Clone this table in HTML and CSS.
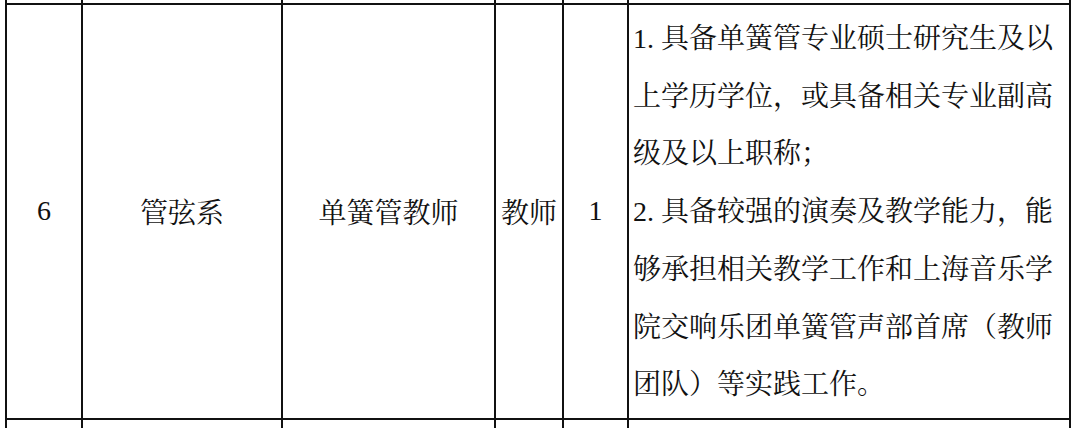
FILE: index.html
```html
<!DOCTYPE html>
<html lang="zh-CN">
<head>
<meta charset="utf-8">
<title>招聘岗位</title>
<link rel="stylesheet" href="styles.css">
</head>
<body>
<table class="grid">
  <colgroup>
    <col class="c-no">
    <col class="c-dept">
    <col class="c-post">
    <col class="c-type">
    <col class="c-num">
    <col class="c-req">
  </colgroup>
  <tr class="edge-top">
    <td></td><td></td><td></td><td></td><td></td><td></td>
  </tr>
  <tr class="main">
    <td class="center">6</td>
    <td class="center">管弦系</td>
    <td class="center">单簧管教师</td>
    <td class="center">教师</td>
    <td class="center">1</td>
    <td class="req"><span class="num">1.</span>具备单簧管专业硕士研究生及以<br>上学历学位，或具备相关专业副高<br>级及以上职称；<br><span class="num">2.</span>具备较强的演奏及教学能力，能<br>够承担相关教学工作和上海音乐学<br>院交响乐团单簧管声部首席（教师<br>团队）等实践工作。</td>
  </tr>
  <tr class="edge-bottom">
    <td></td><td></td><td></td><td></td><td></td><td></td>
  </tr>
</table>
</body>
</html>
```

FILE: styles.css
```css
html, body {
  margin: 0;
  padding: 0;
  overflow: hidden;
  background: #ffffff;
}

body {
  padding-left: 5px;
  font-family: "Liberation Serif", "Noto Serif CJK SC", "Noto Sans CJK SC", serif;
  font-size: 28px;
  color: #111111;
}

.grid {
  border-collapse: collapse;
  table-layout: fixed;
  width: 1064px;
}

.grid td {
  border: 2px solid #111111;
  padding: 0;
}

.c-no { width: 76px; }
.c-dept { width: 200px; }
.c-post { width: 213px; }
.c-type { width: 68px; }
.c-num { width: 65px; }
.c-req { width: 442px; }

.edge-top td {
  border-top: none;
  height: 3px;
}

.edge-bottom td {
  border-bottom: none;
  height: 20px;
}

.main td {
  vertical-align: middle;
}

.center {
  text-align: center;
  white-space: nowrap;
}

.req {
  line-height: 57.7px;
  padding: 5px 0 4px 4px !important;
  white-space: nowrap;
}

.num {
  display: inline-block;
  width: 28px;
}
```
